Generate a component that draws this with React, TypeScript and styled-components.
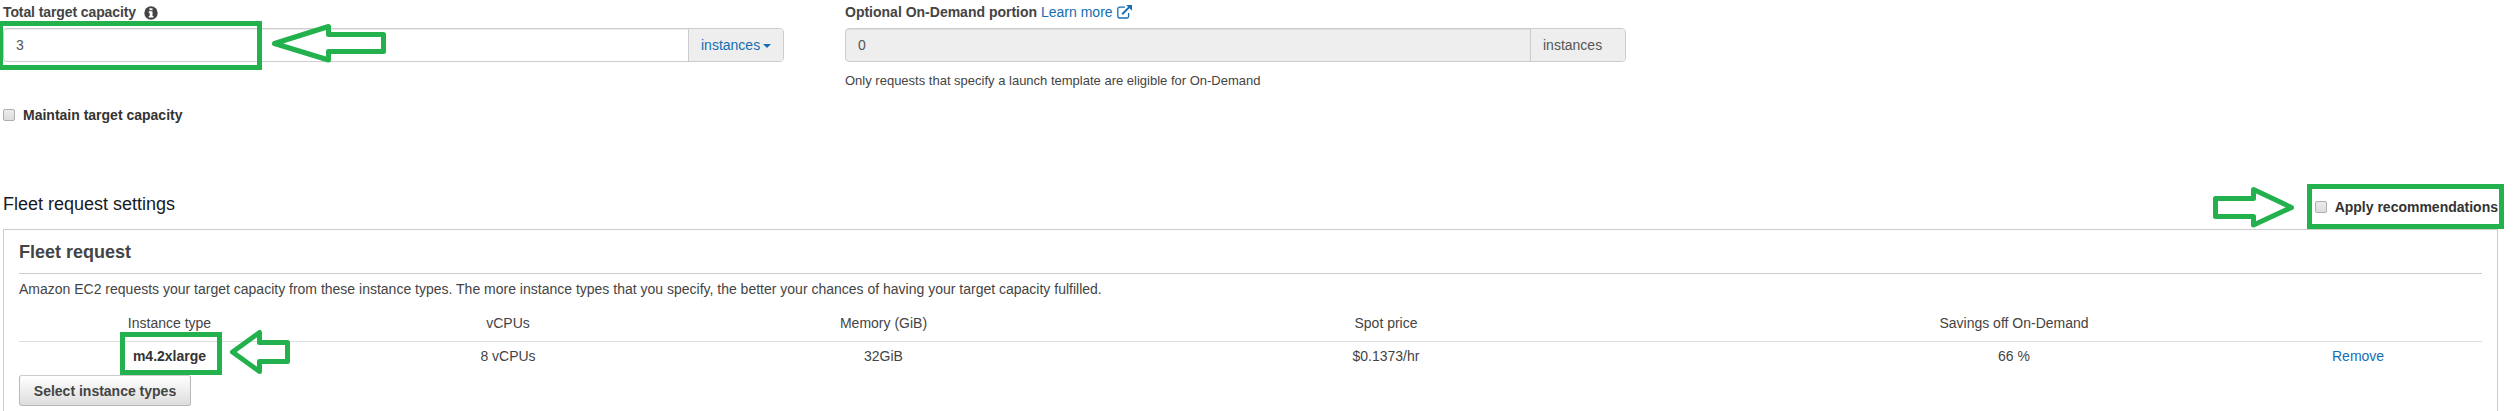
import React from 'react';
import styled, { createGlobalStyle } from 'styled-components';

const GREEN = '#22b14c';

const GlobalStyle = createGlobalStyle`
  *, *::before, *::after { box-sizing: border-box; }
  html, body { margin: 0; background: #fff; overflow: hidden; }
  body { font: 14px/20px "Liberation Sans", Arial, sans-serif; color: #444; }
`;

const Page = styled.main`
  position: relative;
  width: 2513px;
  height: 411px;
  overflow: hidden;
  background: #fff;
  display: flex;
  flex-direction: column;
  padding: 0 15px 0 3px;
`;

const CapacityRow = styled.section`
  display: flex;
  gap: 61px;
  height: 105px;
  padding-top: 2px;
`;

const Field = styled.div`
  width: 781px;
  display: flex;
  flex-direction: column;
`;

const FieldLabel = styled.div<{ $spacing?: string }>`
  display: flex;
  align-items: center;
  height: 26px;
  padding-bottom: 6px;
  font-weight: bold;
  white-space: pre;
  letter-spacing: ${(p) => p.$spacing ?? 'normal'};
`;

const Link = styled.a`
  color: #146eb4;
  font-weight: normal;
  text-decoration: none;
`;

const InputGroup = styled.div<{ $disabled?: boolean }>`
  display: flex;
  height: 34px;
  border: 1px solid #ccc;
  border-radius: 4px;
  overflow: hidden;
  background: ${(p) => (p.$disabled ? '#eee' : '#fff')};
`;

const Value = styled.div`
  flex: 1;
  padding: 6px 12px;
  color: #555;
  box-shadow: inset 0 1px 1px rgba(0, 0, 0, 0.075);
`;

const Addon = styled.div<{ $link?: boolean }>`
  display: flex;
  align-items: center;
  width: 95px;
  padding-left: 12px;
  border-left: 1px solid #ccc;
  background: #eee;
  color: ${(p) => (p.$link ? '#146eb4' : '#555')};
`;

const Caret = styled.span`
  margin: 1px 0 0 3px;
  border: 4px solid transparent;
  border-top-color: #146eb4;
  border-bottom: 0;
`;

const Help = styled.p`
  margin: 9px 0 0;
  font-size: 13px;
`;

const CheckLabel = styled.label`
  display: flex;
  align-items: center;
  gap: 8px;
  height: 20px;
  font-weight: bold;
  color: #333;
  white-space: nowrap;
`;

const CheckBox = styled.span`
  width: 12px;
  height: 12px;
  border: 1px solid #adadad;
  border-radius: 2px;
  background: linear-gradient(#ececec, #dcdcdc);
`;

const SettingsBar = styled.div`
  display: flex;
  justify-content: space-between;
  margin-top: 69px;
  height: 35px;
`;

const Recommendations = styled.div`
  padding-top: 3px;
`;

const SettingsTitle = styled.h2`
  margin: 0;
  font-size: 18px;
  line-height: 20px;
  font-weight: normal;
  color: #16191f;
`;

const Card = styled.section`
  flex: 1;
  border: 1px solid #ccc;
  border-bottom: 0;
  padding: 0 15px;
`;

const CardTitle = styled.h3`
  margin: 0;
  height: 44px;
  padding-top: 12px;
  border-bottom: 1px solid #ccc;
  font-size: 18px;
  line-height: 20px;
`;

const Intro = styled.p`
  margin: 5px 0 14px;
`;

const TableRow = styled.div<{ $head?: boolean }>`
  display: grid;
  grid-template-columns: 301px 376px 375px 630px 626px 1fr;
  height: ${(p) => (p.$head ? '29px' : '33px')};
  padding-top: ${(p) => (p.$head ? '0' : '4px')};
  border-bottom: ${(p) => (p.$head ? '1px solid #ddd' : '0')};
  text-align: center;
`;

const Cell = styled.span<{ $bold?: boolean; $left?: boolean }>`
  font-weight: ${(p) => (p.$bold ? 'bold' : 'normal')};
  color: ${(p) => (p.$bold ? '#333' : 'inherit')};
  text-align: ${(p) => (p.$left ? 'left' : 'center')};
  padding-left: ${(p) => (p.$left ? '5px' : '0')};
`;

const Button = styled.button`
  display: block;
  width: 172px;
  height: 31px;
  padding: 0;
  border: 1px solid #b8b8b8;
  border-top-color: #ccc;
  border-radius: 3px;
  background: linear-gradient(#fff, #ddd);
  font: bold 14px/28px "Liberation Sans", Arial, sans-serif;
  color: #444;
`;

const Highlight = styled.div<{ $x: number; $y: number; $w: number; $h: number }>`
  position: absolute;
  left: ${(p) => p.$x}px;
  top: ${(p) => p.$y}px;
  width: ${(p) => p.$w}px;
  height: ${(p) => p.$h}px;
  border: 5px solid ${GREEN};
`;

const ArrowLayer = styled.svg`
  position: absolute;
  inset: 0;
  pointer-events: none;
`;

const InfoSvg = styled.svg`
  margin-left: 8px;
  position: relative;
  top: 1px;
`;

const ExternalSvg = styled.svg`
  margin-left: 4px;
`;

const InfoIcon = () => (
  <InfoSvg width="14" height="14" viewBox="0 0 14 14">
    <circle cx="7" cy="7" r="6.7" fill="#444" />
    <path d="M5.5 2.2h3v2h-3zM4.8 5.3h3.7v4.6h.9v1.6H4.8V9.9h.9V6.9h-.9z" fill="#fff" />
  </InfoSvg>
);

const ExternalIcon = () => (
  <ExternalSvg width="15" height="14" viewBox="0 0 15 14" fill="none" stroke="#146eb4">
    <path d="M8 2.2H2.6A1.8 1.8 0 0 0 .8 4v7.2A1.8 1.8 0 0 0 2.6 13h7.2a1.8 1.8 0 0 0 1.8-1.8V8" strokeWidth="1.3" />
    <path d="M5.2 9.2 12 2.4" strokeWidth="2" />
    <path d="M9.2 0H15v5.8z" fill="#146eb4" stroke="none" />
  </ExternalSvg>
);

export default function App() {
  return (
    <Page>
      <GlobalStyle />
      <CapacityRow>
        <Field>
          <FieldLabel $spacing="-0.1px">Total target capacity<InfoIcon /></FieldLabel>
          <InputGroup>
            <Value>3</Value>
            <Addon $link>instances<Caret /></Addon>
          </InputGroup>
        </Field>
        <Field>
          <FieldLabel>Optional On-Demand portion <Link>Learn more</Link><ExternalIcon /></FieldLabel>
          <InputGroup $disabled>
            <Value>0</Value>
            <Addon>instances</Addon>
          </InputGroup>
          <Help>Only requests that specify a launch template are eligible for On-Demand</Help>
        </Field>
      </CapacityRow>
      <CheckLabel><CheckBox />Maintain target capacity</CheckLabel>
      <SettingsBar>
        <SettingsTitle>Fleet request settings</SettingsTitle>
        <Recommendations>
          <CheckLabel><CheckBox />Apply recommendations</CheckLabel>
        </Recommendations>
      </SettingsBar>
      <Card>
        <CardTitle>Fleet request</CardTitle>
        <Intro>
          Amazon EC2 requests your target capacity from these instance types. The more instance types that you
          specify, the better your chances of having your target capacity fulfilled.
        </Intro>
        <TableRow $head>
          <Cell>Instance type</Cell>
          <Cell>vCPUs</Cell>
          <Cell>Memory (GiB)</Cell>
          <Cell>Spot price</Cell>
          <Cell>Savings off On-Demand</Cell>
        </TableRow>
        <TableRow>
          <Cell $bold>m4.2xlarge</Cell>
          <Cell>8 vCPUs</Cell>
          <Cell>32GiB</Cell>
          <Cell>$0.1373/hr</Cell>
          <Cell>66 %</Cell>
          <Cell $left><Link>Remove</Link></Cell>
        </TableRow>
        <Button>Select instance types</Button>
      </Card>
      <Highlight $x={-2} $y={21} $w={264} $h={49} />
      <Highlight $x={120} $y={332} $w={102} $h={43} />
      <Highlight $x={2307} $y={184} $w={197} $h={45} />
      <ArrowLayer width="2513" height="411" fill="none" stroke={GREEN} strokeWidth="5" strokeLinejoin="round">
        <path d="M274.5 43.5 328.5 26.5V34.5H383.5V51.5H328.5V60Z" />
        <path d="M232.5 352 259.5 332.5V342.5H287.5V361.5H259.5V371.5Z" />
        <path d="M2291.5 207.5 2253.5 189.5V198.5H2215.5V216.5H2253.5V225Z" />
      </ArrowLayer>
    </Page>
  );
}
